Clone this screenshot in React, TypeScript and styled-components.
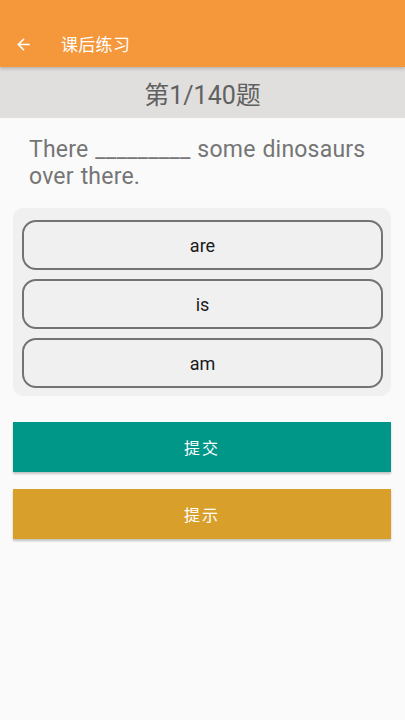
import styled, { createGlobalStyle } from "styled-components";

const GlobalStyle = createGlobalStyle`
  html, body {
    margin: 0;
    padding: 0;
    background: #fafafa;
  }
  body {
    font-family: Roboto, "Noto Sans CJK SC", sans-serif;
  }
`;

const Page = styled.div`
  width: 405px;
  min-height: 720px;
  background: #fafafa;
  display: flex;
  flex-direction: column;
`;

const Header = styled.header`
  height: 67px;
  box-sizing: border-box;
  padding-top: 22px;
  background: #f5973b;
  display: flex;
  align-items: center;
  box-shadow: 0 2px 3px rgba(0, 0, 0, 0.18);
  position: relative;
  z-index: 1;
`;

const BackButton = styled.div`
  width: 61px;
  height: 45px;
  display: flex;
  align-items: center;
  padding-left: 14px;
  box-sizing: border-box;
`;

const Title = styled.h1`
  margin: 0 0 2px;
  font-size: 17px;
  font-weight: 400;
  color: #fff;
  letter-spacing: 0.3px;
`;

const Counter = styled.div`
  height: 51px;
  background: #e0dfdd;
  display: flex;
  align-items: center;
  justify-content: center;
  font-size: 25px;
  color: #616161;
`;

const Question = styled.p`
  margin: 18px 0 0;
  padding: 0 12px 0 29px;
  font-size: 23px;
  line-height: 27px;
  letter-spacing: 0.2px;
  word-spacing: 1px;
  color: #757575;
`;

const Options = styled.div`
  margin: 18px 14px 0 13px;
  padding: 12px 8px 8px 9px;
  background: #f0f0f0;
  border-radius: 10px;
  display: flex;
  flex-direction: column;
  gap: 9px;
`;

const Option = styled.button`
  height: 50px;
  border: 2px solid #737373;
  border-radius: 14px;
  background: #f0f0f0;
  font-family: Roboto, sans-serif;
  font-size: 18px;
  color: #1a1a1a;
  cursor: pointer;
`;

const Actions = styled.div`
  margin: 26px 14px 0 13px;
  display: flex;
  flex-direction: column;
  gap: 17px;
`;

const ActionButton = styled.button<{ $bg: string }>`
  height: 50px;
  border: none;
  background: ${(p) => p.$bg};
  color: #fff;
  font-family: "Noto Sans CJK SC", sans-serif;
  font-size: 16px;
  letter-spacing: 2px;
  padding-left: 6px;
  box-shadow: 0 2px 2px rgba(0, 0, 0, 0.22);
  cursor: pointer;
`;

function App() {
  const options = ["are", "is", "am"];

  return (
    <Page>
      <GlobalStyle />
      <Header>
        <BackButton>
          <svg width="19" height="19" viewBox="0 0 24 24">
            <path
              d="M20 11H7.83l5.59-5.59L12 4l-8 8 8 8 1.41-1.41L7.83 13H20v-2z"
              fill="#fff"
            />
          </svg>
        </BackButton>
        <Title>课后练习</Title>
      </Header>
      <Counter>第1/140题</Counter>
      <Question>There _________ some dinosaurs over there.</Question>
      <Options>
        {options.map((o) => (
          <Option key={o}>{o}</Option>
        ))}
      </Options>
      <Actions>
        <ActionButton $bg="#009688">提交</ActionButton>
        <ActionButton $bg="#d99f2b">提示</ActionButton>
      </Actions>
    </Page>
  );
}

export default App;
